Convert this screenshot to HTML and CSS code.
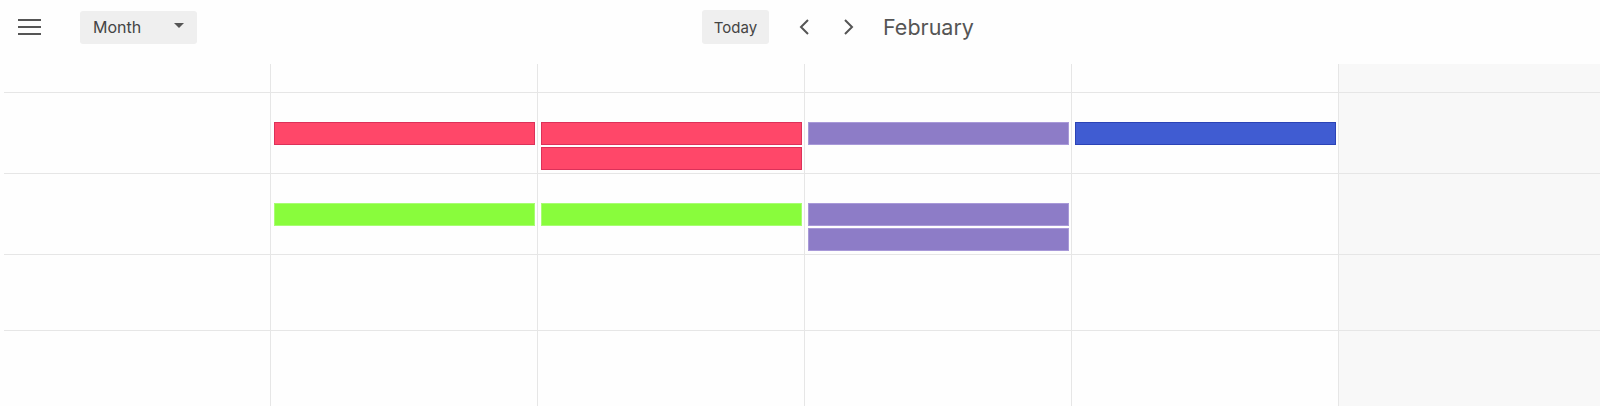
FILE: index.html
```html
<!DOCTYPE html>
<html lang="en">
<head>
    <meta charset="UTF-8">
    <meta name="viewport" content="width=device-width, initial-scale=1.0">
    <title>Calendar</title>
    <link rel="stylesheet" href="styles.css">
</head>
<body>
    <div class="toolbar">
        <button class="menu-btn" aria-label="Menu">
            <span></span><span></span><span></span>
        </button>
        <button class="view-select">
            <span>Month</span>
            <svg width="10" height="6" viewBox="0 0 10 6"><path d="M0 0h10L5 5z" fill="#555"/></svg>
        </button>
        <div class="nav">
            <button class="today-btn">Today</button>
            <button class="arrow" aria-label="Previous">
                <svg width="12" height="18" viewBox="0 0 12 18"><path d="M10 2 3 9l7 7" fill="none" stroke="#555" stroke-width="2"/></svg>
            </button>
            <button class="arrow" aria-label="Next">
                <svg width="12" height="18" viewBox="0 0 12 18"><path d="M2 2l7 7-7 7" fill="none" stroke="#555" stroke-width="2"/></svg>
            </button>
            <span class="title">February</span>
        </div>
    </div>

    <div class="month-grid">
        <!-- header row -->
        <div class="cell head"></div>
        <div class="cell head"></div>
        <div class="cell head"></div>
        <div class="cell head"></div>
        <div class="cell head"></div>
        <div class="cell head off"></div>

        <!-- week 1 -->
        <div class="cell"></div>
        <div class="cell"><div class="event red"></div></div>
        <div class="cell"><div class="event red"></div><div class="event red"></div></div>
        <div class="cell"><div class="event purple"></div></div>
        <div class="cell"><div class="event blue"></div></div>
        <div class="cell off"></div>

        <!-- week 2 -->
        <div class="cell"></div>
        <div class="cell"><div class="event green"></div></div>
        <div class="cell"><div class="event green"></div></div>
        <div class="cell"><div class="event purple"></div><div class="event purple"></div></div>
        <div class="cell"></div>
        <div class="cell off"></div>

        <!-- week 3 -->
        <div class="cell"></div>
        <div class="cell"></div>
        <div class="cell"></div>
        <div class="cell"></div>
        <div class="cell"></div>
        <div class="cell off"></div>

        <!-- week 4 -->
        <div class="cell"></div>
        <div class="cell"></div>
        <div class="cell"></div>
        <div class="cell"></div>
        <div class="cell"></div>
        <div class="cell off"></div>
    </div>
</body>
</html>
```

FILE: styles.css
```css
body {
    margin: 0;
    font-family: Inter, "Open Sans", sans-serif;
    background-color: #fefefe;
    color: #444;
    overflow: hidden;
}
button {
    font-family: inherit;
    border: none;
    background: none;
    padding: 0;
    cursor: pointer;
}
.toolbar {
    height: 54px;
    display: flex;
    align-items: center;
    padding-left: 18px;
}
.menu-btn {
    width: 23px;
    display: flex;
    flex-direction: column;
    gap: 5px;
}
.menu-btn span {
    display: block;
    height: 2px;
    background-color: #555;
}
.view-select {
    margin-left: 39px;
    width: 117px;
    height: 33px;
    display: flex;
    align-items: center;
    justify-content: space-between;
    padding: 0 13px;
    box-sizing: border-box;
    background-color: #efefef;
    border-radius: 3px;
    font-size: 16px;
    color: #444;
}
.view-select svg {
    margin-top: -3px;
}
.nav {
    margin-left: 505px;
    display: flex;
    align-items: center;
}
.today-btn {
    width: 67px;
    height: 34px;
    background-color: #efefef;
    border-radius: 3px;
    font-size: 15px;
    color: #444;
}
.arrow {
    width: 12px;
    height: 18px;
    margin-left: 29px;
}
.arrow + .arrow {
    margin-left: 33px;
}
.title {
    margin-left: 28px;
    font-size: 21.5px;
    color: #555;
}
.month-grid {
    display: grid;
    grid-template-columns: repeat(6, 267px);
    margin-top: 10px;
    margin-left: 4px;
}
.cell {
    border-right: 1px solid #e6e6e6;
    border-bottom: 1px solid #e6e6e6;
    padding: 29px 2px 3px 3px;
    min-height: 43px;
    display: flex;
    flex-direction: column;
    gap: 2px;
}
.cell.head {
    padding: 0;
    height: 28px;
    min-height: 0;
}
.cell.off {
    background-color: #f8f8f8;
    border-right: none;
}
.event {
    height: 23px;
    box-sizing: border-box;
    border: 1px solid;
}
.event.red {
    background-color: #ff4769;
    border-color: #dc3159;
}
.event.green {
    background-color: #89fc3c;
    border-color: #a8fd72;
}
.event.purple {
    background-color: #8d7cc7;
    border-color: #a899d8;
}
.event.blue {
    background-color: #405cd2;
    border-color: #2b43b6;
}
```
